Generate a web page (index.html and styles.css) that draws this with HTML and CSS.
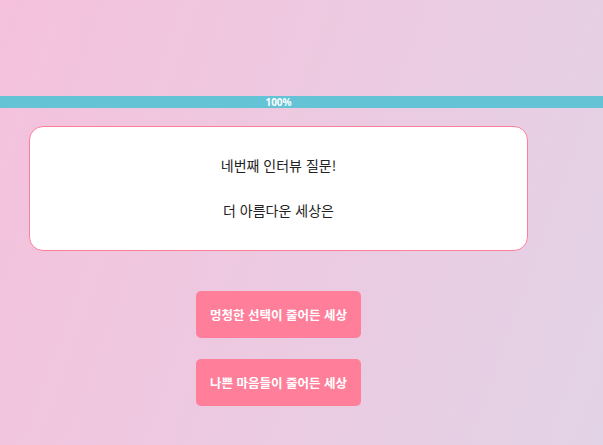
FILE: index.html
```html
<!DOCTYPE html>
<html lang="ko">
<head>
    <meta charset="UTF-8">
    <meta name="viewport" content="width=device-width, initial-scale=1.0">
    <title>인터뷰 질문</title>
    <link rel="stylesheet" href="styles.css">
</head>
<body>
    <div class="progress">
        <div class="progress-bar">100%</div>
    </div>
    <div class="container">
        <div class="question-box">
            <p class="question-title">네번째 인터뷰 질문!</p>
            <p class="question-text">더 아름다운 세상은</p>
        </div>
        <div class="answers">
            <button class="answer-btn">멍청한 선택이 줄어든 세상</button>
            <button class="answer-btn">나쁜 마음들이 줄어든 세상</button>
        </div>
    </div>
</body>
</html>
```

FILE: styles.css
```css
body {
    font-family: 'Noto Sans CJK KR', 'Noto Sans', sans-serif;
    background: linear-gradient(110deg, #f5c1dc 0%, #e3d3e6 100%);
    margin: 0;
    min-height: 445px;
}
.progress {
    margin-top: 96px;
    background-color: #64c3d4;
}
.progress-bar {
    height: 12px;
    line-height: 12px;
    padding-right: 46px;
    font-family: 'Noto Sans', sans-serif;
    font-size: 10px;
    font-weight: bold;
    color: #fff;
    text-align: center;
}
.container {
    width: 499px;
    margin-left: 29px;
    padding-top: 18px;
}
.question-box {
    background: #ffffff;
    border: 1px solid #ff7f9b;
    border-radius: 14px;
    height: 125px;
    box-sizing: border-box;
    padding-top: 26px;
    text-align: center;
}
.question-box p {
    margin: 0;
    font-size: 14px;
    color: #222;
    line-height: 24px;
}
.question-title {
    margin-bottom: 21px !important;
}
.answers {
    display: flex;
    flex-direction: column;
    align-items: center;
    gap: 21px;
    margin-top: 40px;
}
.answer-btn {
    width: 165px;
    height: 47px;
    border: none;
    border-radius: 5px;
    background-color: #ff7f9b;
    color: #fff;
    font-family: 'Noto Sans CJK KR', sans-serif;
    font-size: 12.5px;
    font-weight: bold;
    cursor: pointer;
}
```
